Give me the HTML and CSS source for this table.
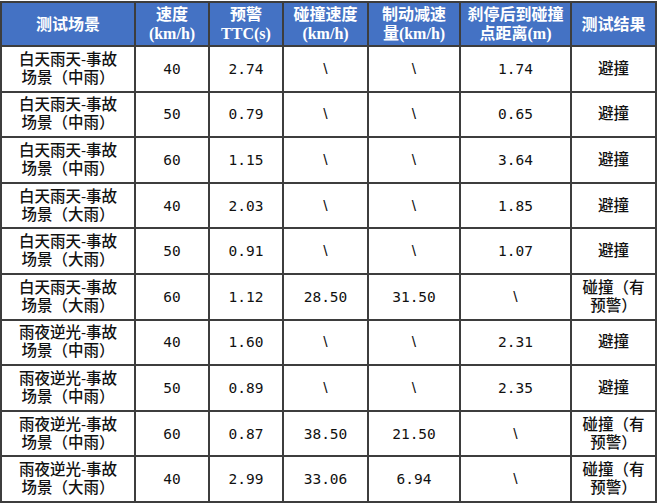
FILE: index.html
```html
<!DOCTYPE html>
<html lang="zh">
<head>
<meta charset="utf-8">
<link rel="stylesheet" href="styles.css">
</head>
<body>
<table class="grid">
  <colgroup>
    <col class="c1"><col class="c2"><col class="c3"><col class="c4"><col class="c5"><col class="c6"><col class="c7">
  </colgroup>
  <thead>
    <tr>
      <th>测试场景</th>
      <th>速度<br>(km/h)</th>
      <th>预警<br>TTC(s)</th>
      <th>碰撞速度<br>(km/h)</th>
      <th>制动减速<br>量(km/h)</th>
      <th>刹停后到碰撞<br>点距离(m)</th>
      <th>测试结果</th>
    </tr>
  </thead>
  <tbody>
    <tr><td>白天雨天-事故<br>场景（中雨）</td><td class="n">40</td><td class="n">2.74</td><td>\</td><td>\</td><td class="n">1.74</td><td>避撞</td></tr>
    <tr><td>白天雨天-事故<br>场景（中雨）</td><td class="n">50</td><td class="n">0.79</td><td>\</td><td>\</td><td class="n">0.65</td><td>避撞</td></tr>
    <tr><td>白天雨天-事故<br>场景（中雨）</td><td class="n">60</td><td class="n">1.15</td><td>\</td><td>\</td><td class="n">3.64</td><td>避撞</td></tr>
    <tr><td>白天雨天-事故<br>场景（大雨）</td><td class="n">40</td><td class="n">2.03</td><td>\</td><td>\</td><td class="n">1.85</td><td>避撞</td></tr>
    <tr><td>白天雨天-事故<br>场景（大雨）</td><td class="n">50</td><td class="n">0.91</td><td>\</td><td>\</td><td class="n">1.07</td><td>避撞</td></tr>
    <tr><td>白天雨天-事故<br>场景（大雨）</td><td class="n">60</td><td class="n">1.12</td><td class="n">28.50</td><td class="n">31.50</td><td>\</td><td>碰撞（有<br>预警）</td></tr>
    <tr><td>雨夜逆光-事故<br>场景（中雨）</td><td class="n">40</td><td class="n">1.60</td><td>\</td><td>\</td><td class="n">2.31</td><td>避撞</td></tr>
    <tr><td>雨夜逆光-事故<br>场景（中雨）</td><td class="n">50</td><td class="n">0.89</td><td>\</td><td>\</td><td class="n">2.35</td><td>避撞</td></tr>
    <tr><td>雨夜逆光-事故<br>场景（中雨）</td><td class="n">60</td><td class="n">0.87</td><td class="n">38.50</td><td class="n">21.50</td><td>\</td><td>碰撞（有<br>预警）</td></tr>
    <tr><td>雨夜逆光-事故<br>场景（大雨）</td><td class="n">40</td><td class="n">2.99</td><td class="n">33.06</td><td class="n">6.94</td><td>\</td><td>碰撞（有<br>预警）</td></tr>
  </tbody>
</table>
</body>
</html>
```

FILE: styles.css
```css
html, body {
  margin: 0;
  padding: 0;
  background: #ffffff;
}
body {
  padding-top: 1px;
}
.grid {
  table-layout: fixed;
  border-collapse: separate;
  border-spacing: 0;
  width: 657px;
  border-left: 2px solid #3d3d3d;
  border-top: 2px solid #3d3d3d;
}
.c1 { width: 134px; }
.c2 { width: 74px; }
.c3 { width: 74px; }
.c4 { width: 85px; }
.c5 { width: 92px; }
.c6 { width: 111px; }
.c7 { width: 85px; }
.grid th, .grid td {
  border-right: 2px solid #3d3d3d;
  border-bottom: 2px solid #3d3d3d;
  padding: 0;
  text-align: center;
  vertical-align: middle;
  overflow: hidden;
  white-space: nowrap;
}
.grid th {
  background: #4472c4;
  color: #ffffff;
  font-family: "Liberation Serif", "Noto Sans CJK SC", serif;
  font-weight: bold;
  font-size: 16px;
  line-height: 19px;
  height: 42px;
}
.grid td {
  color: #111111;
  font-family: "Liberation Sans", "Noto Sans CJK SC", sans-serif;
  font-weight: 500;
  font-size: 15.5px;
  line-height: 18px;
  height: 43.6px;
}
.grid td.n {
  font-family: "DejaVu Sans Mono", "Noto Sans CJK SC", monospace;
  font-weight: normal;
  font-size: 14.5px;
}
```
